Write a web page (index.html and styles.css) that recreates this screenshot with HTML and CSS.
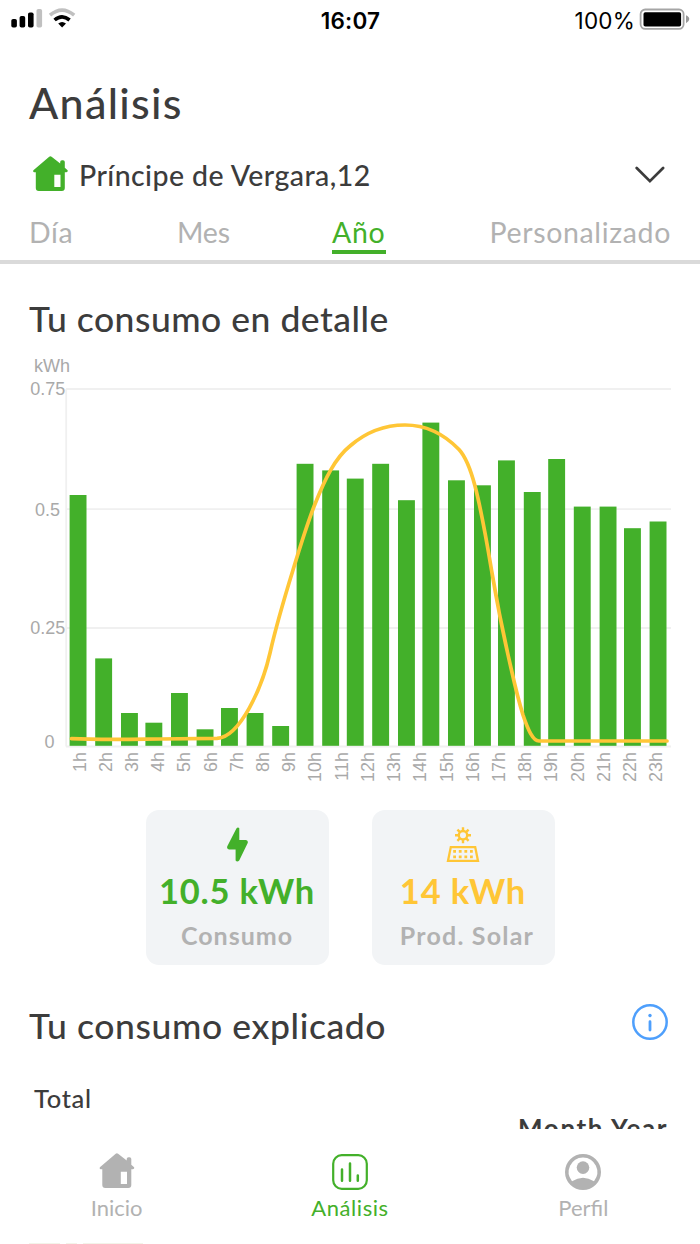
FILE: index.html
```html
<!DOCTYPE html>
<html lang="es">
<head>
<meta charset="utf-8">
<title>Análisis</title>
<link rel="stylesheet" href="styles.css">
</head>
<body>
<div class="app">
  <header class="status">
    <svg class="signal" width="68" height="24" viewBox="0 0 68 24">
      <rect x="0.3" y="12" width="5.6" height="8.5" rx="1.8"/>
      <rect x="8.6" y="9" width="5.6" height="11.5" rx="1.8"/>
      <rect x="17" y="5.4" width="5.6" height="15.1" rx="1.8"/>
      <rect x="25.5" y="2" width="5.6" height="18.5" rx="1.8" fill="#c0c0c0"/>
      <path d="M39 8.2Q51 -2 63.2 8.2" fill="none" stroke="#c0c0c0" stroke-width="3.6"/>
      <path d="M43.6 13Q51 6.6 58.6 13" fill="none" stroke="#000" stroke-width="3.6"/>
      <path d="M47.2 16.6Q51.1 13.2 55 16.6L51.1 20.4Z"/>
    </svg>
    <span class="clock">16:07</span>
    <span class="battery"><span class="percent">100%</span>
      <svg width="51" height="24" viewBox="0 0 51 24">
        <rect x="1.6" y="2.5" width="43" height="19.4" rx="4.6" fill="none" stroke="#a5a5a5" stroke-width="1.8"/>
        <rect x="4.5" y="5.2" width="37.6" height="14.4" rx="1.8"/>
        <path d="M47 8.2Q50.3 9.7 50.3 12.1T47 16.3Z" fill="#999"/>
      </svg>
    </span>
  </header>

  <h1 class="title"><span>Análisis</span></h1>

  <div class="address">
    <svg class="house" width="35" height="36" viewBox="0 0 35 36"><path fill-rule="evenodd" d="M16.2.7Q17.4-.3 18.6.7L27.2 7.6V6Q27.2 4.3 29 4.3H30Q31.8 4.3 31.8 6V11.8L34.6 14.2Q35.2 16 33.4 16.2H31.8V32Q31.8 35 28.8 35H5.8Q2.8 35 2.8 32V16.2H1.4Q-.4 16 .4 14.2ZM21.3 18.8V31H27.5V18.8Z"/></svg>
    <span class="street">Príncipe de Vergara,12</span>
    <svg class="chevron" width="30" height="18" viewBox="0 0 30 18"><path d="M1.7 2L14.9 15.2L28.1 2" fill="none" stroke="#3c3c3c" stroke-width="2.7" stroke-linecap="round" stroke-linejoin="miter"/></svg>
  </div>

  <nav class="tabs">
    <span class="tab">Día</span>
    <span class="tab mes">Mes</span>
    <span class="tab active">Año</span>
    <span class="tab">Personalizado</span>
  </nav>

  <h2 class="heading h-detail"><span>Tu consumo en detalle</span></h2>

  <svg class="chart" width="700" height="447" viewBox="0 343 700 447">
    <g class="grid">
      <path d="M66 389H671M66 509.2H671M66 628H671M66 746.5H671M66.2 389V746.5"/>
    </g>
    <g class="axis">
      <text x="34" y="372" textLength="36">kWh</text>
      <text x="30.3" y="395" textLength="35">0.75</text>
      <text x="35" y="515.5" textLength="25">0.5</text>
      <text x="30.3" y="634.2" textLength="35">0.25</text>
      <text x="44.6" y="748.3">0</text>
    </g>
    <g id="bars" class="bars"></g>
    <path class="solar" d="M71.5 738.6C100 740 130 739.3 160 739L217 738.4C240 737 262 688 270 653C277 622 285 596 293 570C300 547 307 524 315 504C325 479 335 458 350 446C365 433 384 425 405 425C427 425 444 434 459 449.5C465 456 470 467 475 486C481 509 487 543 491.5 570C497 603 504 638 511 668C515 686 519 702 523 715C528 730 533 741 539 741H667"/>
    <g id="hours" class="axis"></g>
  </svg>

  <section class="cards">
    <article class="card green">
      <svg width="34" height="36" viewBox="0 0 34 36"><path d="M16.4 1.5Q18-.2 19.3 1.3V13H26Q28.4 13.4 27.7 16L19.2 33.5Q17.2 35.6 15.6 33.5V22.4H9Q6.4 21.8 7.3 19.2Z"/></svg>
      <strong class="value">10.5 kWh</strong>
      <span class="label">Consumo</span>
    </article>
    <article class="card yellow">
      <svg width="34" height="36" viewBox="0 0 34 36">
        <g fill="none" stroke="#ffc636"><circle cx="17" cy="8.2" r="4.2" stroke-width="2.4"/>
        <path stroke-width="2.4" d="M17 .2V4M17 12.4V16.2M9 8.2H12.8M21.2 8.2H25M11.4 2.6L14 5.2M20 11.2L22.6 13.8M11.4 13.8L14 11.2M20 5.2L22.6 2.6"/>
        <path stroke-width="2.3" d="M4.8 20.1H29.2L32 33.9H2Z"/>
        <path stroke-width="2.8" stroke-dasharray="2.8 2.8" d="M7.2 24.4H26.9M7.2 29.8H26.9"/></g>
      </svg>
      <strong class="value">14 kWh</strong>
      <span class="label solar-label">Prod. Solar</span>
    </article>
  </section>

  <div class="explained">
    <h2 class="heading h-explained"><span>Tu consumo explicado</span></h2>
    <svg class="info" width="36" height="36" viewBox="0 0 36 36"><circle cx="18" cy="18" r="16.7" fill="none" stroke="#4e9ffc" stroke-width="2.5"/><circle cx="18" cy="11.5" r="1.7" fill="#4e9ffc"/><path d="M18 17.7V26" stroke="#4e9ffc" stroke-width="2.8" stroke-linecap="round"/></svg>
  </div>

  <section class="totals">
    <span class="total">Total</span>
    <span class="period"><span>Month</span> <span>Year</span></span>
  </section>

  <footer class="bottom">
    <div class="item">
      <svg width="36" height="36" viewBox="0 0 35 36"><path fill-rule="evenodd" d="M16.2.7Q17.4-.3 18.6.7L27.2 7.6V6Q27.2 4.3 29 4.3H30Q31.8 4.3 31.8 6V11.8L34.6 14.2Q35.2 16 33.4 16.2H31.8V32Q31.8 35 28.8 35H5.8Q2.8 35 2.8 32V16.2H1.4Q-.4 16 .4 14.2ZM21.3 18.8V31H27.5V18.8Z"/></svg>
      <span>Inicio</span>
    </div>
    <div class="item on">
      <svg width="36" height="36" viewBox="0 0 36 36"><g fill="none" stroke="#43b02a" stroke-width="2.2" stroke-linecap="round"><rect x="1.2" y="1.2" width="33.6" height="33.6" rx="8.5"/><path stroke-width="2.5" d="M10 15.5V26.8M18 9.5V26.8M25.8 21.5V26.8"/></g></svg>
      <span>Análisis</span>
    </div>
    <div class="item">
      <svg width="36" height="36" viewBox="0 0 36 36"><path fill-rule="evenodd" d="M18 0A18 18 0 1 1 18 36A18 18 0 1 1 18 0ZM18 3.4A14.6 14.6 0 0 0 7 27.2Q18 20.2 29 27.2A14.6 14.6 0 0 0 18 3.4Z"/><circle cx="18" cy="13.6" r="6.3"/></svg>
      <span>Perfil</span>
    </div>
  </footer>
  <div class="peek"><i></i><i></i><i></i></div>
</div>
<script src="chart.js"></script>
</body>
</html>
```

FILE: styles.css
```css
* { box-sizing: border-box; }
body { margin: 0; background: #fff; }
.app {
  width: 700px; height: 1244px; overflow: hidden;
  display: flex; flex-direction: column;
  font-family: Lato, "Open Sans", sans-serif; color: #3c3c3c; white-space: nowrap;
}
.app > * { flex: none; }
.status {
  height: 40px; padding: 0 10px 0 11px; color: #000;
  display: grid; grid-template-columns: 1fr auto 1fr; align-items: center;
  font-family: Inter, sans-serif; font-size: 22.5px;
}
.signal { margin-top: -2px; }
.clock { font-weight: 600; letter-spacing: 0.2px; }
.battery { display: flex; justify-content: flex-end; align-items: center; gap: 5px; }
.percent { letter-spacing: 0.2px; margin-right: -1px; }
.battery svg { margin-top: -2px; }
.title { margin: 0; height: 98px; padding: 39px 0 0 29px; font-size: 43px; line-height: 48px; font-weight: 500; letter-spacing: 1.3px; }
.address { height: 74px; padding: 0 35px 0 33px; display: flex; align-items: center; font-size: 28.5px; font-weight: 500; letter-spacing: 0.43px; }
.house { fill: #43b02a; margin-top: -3px; }
.street { margin-left: 11px; margin-top: -1px; }
.chevron { margin-left: auto; }
.tabs {
  height: 52px; padding: 1px 29px 0 29px; border-bottom: 4px solid #dadada;
  display: grid; grid-template-columns: 148px 155px 1fr auto; justify-items: start;
  font-size: 28.5px; line-height: 39px; color: #b2b2b2; letter-spacing: 0.65px;
}
.tab { height: 41px; }
.mes { letter-spacing: -0.2px; }
.active { color: #43b02a; border-bottom: 4px solid #43b02a; width: 54px; }
.heading { margin: 0; font-size: 35.5px; line-height: 48px; font-weight: 500; }
.h-detail { height: 79px; padding: 31px 0 0 29px; letter-spacing: 0.5px; }
.h-explained { margin: -1px 0 0 -1px; letter-spacing: 0.6px; }
.chart { display: block; }
.grid path { fill: none; stroke: #f0f0f0; stroke-width: 1.8; }
.axis { font-family: "Liberation Sans", Arial, sans-serif; font-size: 18px; fill: #a9a9a9; }
.bars { fill: #43b02a; }
.solar { fill: none; stroke: #ffc636; stroke-width: 3.7; stroke-linecap: round; }
.cards { height: 175px; padding-top: 20px; display: flex; justify-content: center; gap: 43px; }
.card {
  width: 183px; height: 155px; border-radius: 13px; background: #f2f4f6; padding-top: 17px;
  display: flex; flex-direction: column; align-items: center;
}
.card svg { display: block; }
.green { color: #43b02a; fill: #43b02a; }
.yellow { color: #ffc636; }
.value { font-size: 34.5px; line-height: 44px; margin-top: 6px; letter-spacing: 0.8px; }
.label { font-size: 25px; line-height: 32px; margin-top: 6px; font-weight: 700; color: #b2b2b2; letter-spacing: 1px; }
.solar-label { margin-left: 8px; letter-spacing: 1.2px; }
.explained { height: 92px; padding: 38px 32px 0 30px; display: flex; justify-content: space-between; }
.info { margin-top: 1px; }
.totals { height: 72px; padding: 25px 32px 0 34px; display: flex; justify-content: space-between; font-size: 25.5px; line-height: 32px; overflow: hidden; }
.total { font-weight: 500; letter-spacing: 0.7px; }
.period { margin-top: 30px; font-size: 26px; font-weight: 700; letter-spacing: 1.6px; }
.bottom { height: 113px; padding-top: 25px; display: grid; grid-template-columns: repeat(3, 1fr); font-size: 22px; line-height: 30px; color: #b2b2b2; fill: #b2b2b2; }
.item { display: flex; flex-direction: column; align-items: center; gap: 3px; }
.item:first-child svg { margin-top: -1px; margin-bottom: 1px; }
.on { color: #43b02a; letter-spacing: 0.55px; }
.peek { height: 2px; padding-left: 29px; display: flex; align-items: flex-end; gap: 6px; }
.peek i { height: 1px; width: 31px; background: #f3f3e9; }
.peek i:nth-child(2) { width: 11px; }
.peek i:nth-child(3) { width: 60px; }
```

FILE: chart.js
```javascript
const NS = 'http://www.w3.org/2000/svg';
const bars = [
  [69.6, 495], [95.2, 658.4], [121, 713], [145.4, 722.7], [171, 693], [196.6, 729.3],
  [221, 708], [246.6, 713], [272.2, 726], [296.6, 463.8], [322.2, 470.4], [346.8, 478.6],
  [372.2, 463.8], [398, 500.2], [422.4, 422.6], [448, 480.3], [474, 485.3], [498, 460.4],
  [523.8, 492], [548.2, 459], [573.8, 506.6], [599.6, 506.6], [624, 528.2], [649.6, 521.5]
];
for (const [x, y] of bars) {
  const rect = document.createElementNS(NS, 'rect');
  rect.setAttribute('x', x);
  rect.setAttribute('y', y);
  rect.setAttribute('width', 16.9);
  rect.setAttribute('height', 745.8 - y);
  document.getElementById('bars').append(rect);
}
for (let h = 1; h <= 23; h++) {
  const label = document.createElementNS(NS, 'text');
  label.textContent = h + 'h';
  label.setAttribute('text-anchor', 'end');
  label.setAttribute('transform', `translate(${85.5 + (h - 1) * 26.22} 752) rotate(-90)`);
  document.getElementById('hours').append(label);
}
```
